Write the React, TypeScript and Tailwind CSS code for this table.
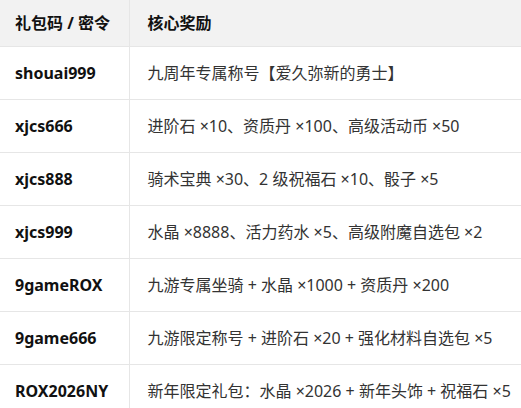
const rows: [string, string][] = [
  ["shouai999", "九周年专属称号【爱久弥新的勇士】"],
  ["xjcs666", "进阶石 ×10、资质丹 ×100、高级活动币 ×50"],
  ["xjcs888", "骑术宝典 ×30、2 级祝福石 ×10、骰子 ×5"],
  ["xjcs999", "水晶 ×8888、活力药水 ×5、高级附魔自选包 ×2"],
  ["9gameROX", "九游专属坐骑 + 水晶 ×1000 + 资质丹 ×200"],
  ["9game666", "九游限定称号 + 进阶石 ×20 + 强化材料自选包 ×5"],
  ["ROX2026NY", "新年限定礼包：水晶 ×2026 + 新年头饰 + 祝福石 ×5"],
];

export default function App() {
  return (
    <div
      className="w-[521px] h-[408px] overflow-hidden bg-white"
      style={{ fontFamily: '"Noto Sans", "Noto Sans CJK SC", sans-serif' }}
    >
      <table className="w-[600px] border-collapse text-[16px] text-[#333]">
        <thead>
          <tr className="h-[46px] bg-[#f2f2f2] border-b border-[#e6e6e6]">
            <th className="w-[129px] border-r border-[#e6e6e6] pl-[15px] text-left font-bold text-[#111]">
              礼包码 / 密令
            </th>
            <th className="pl-[18px] text-left font-bold text-[#111]">核心奖励</th>
          </tr>
        </thead>
        <tbody>
          {rows.map(([code, reward]) => (
            <tr key={code} className="h-[53px] border-b border-[#e6e6e6]">
              <td className="border-r border-[#e6e6e6] pl-[15px] font-bold text-[#111] whitespace-nowrap">
                {code}
              </td>
              <td className="pl-[18px] whitespace-nowrap">{reward}</td>
            </tr>
          ))}
        </tbody>
      </table>
    </div>
  );
}
